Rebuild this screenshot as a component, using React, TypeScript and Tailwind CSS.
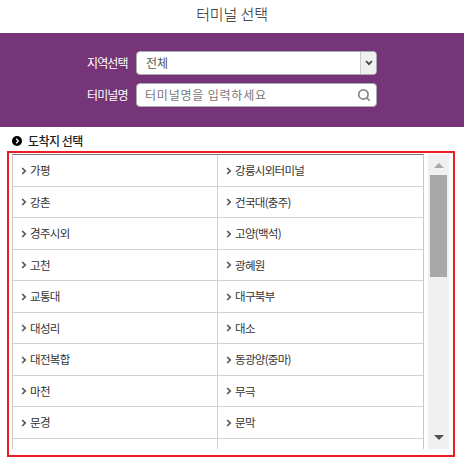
import { Search } from "lucide-react";

const rows = [
  ["가평", "강릉시외터미널"],
  ["강촌", "건국대(충주)"],
  ["경주시외", "고양(백석)"],
  ["고천", "광혜원"],
  ["교통대", "대구북부"],
  ["대성리", "대소"],
  ["대전복합", "동광양(중마)"],
  ["마천", "무극"],
  ["문경", "문막"],
  ["", ""],
];

function Chevron({ className }: { className?: string }) {
  return (
    <svg viewBox="0 0 6 8" className={className} fill="none" stroke="currentColor" strokeWidth="1.7">
      <path d="M1.2 1 L4.2 4 L1.2 7" />
    </svg>
  );
}

function Cell({ name, last }: { name: string; last?: boolean }) {
  return (
    <div className={`flex items-center pl-[8px] pt-[1px] text-[11.5px] tracking-[-0.7px] text-[#333] ${last ? "" : "border-r border-[#d2d2d2]"}`}>
      {name && <Chevron className="mr-[3px] h-[8px] w-[6px] text-[#555]" />}
      <span>{name}</span>
    </div>
  );
}

export default function App() {
  return (
    <div className="h-[466px] w-[464px] overflow-hidden bg-white font-['Noto_Sans_CJK_KR','Noto_Sans',sans-serif]">
      <h1 className="flex h-[33px] items-center justify-center pb-[5px] text-[15px] font-light tracking-[-0.1px] text-[#222]">
        터미널 선택
      </h1>

      <div className="flex h-[94px] flex-col gap-[8px] bg-[#753578] pl-[87px] pt-[18px]">
        <div className="flex items-center">
          <label className="w-[49px] text-[12px] tracking-[-0.9px] text-white">지역선택</label>
          <div className="flex h-[24px] w-[241px] overflow-hidden rounded-[4px] border border-[#aaa] bg-white">
            <span className="flex flex-1 items-center pl-[9px] text-[12px] text-[#555]">전체</span>
            <span className="flex w-[16px] items-center justify-center border-l border-[#ccc] bg-[#f0f0f0]">
              <svg viewBox="0 0 8 6" className="h-[6px] w-[8px] text-[#444]" fill="none" stroke="currentColor" strokeWidth="1.8">
                <path d="M1 1 L4 4.2 L7 1" />
              </svg>
            </span>
          </div>
        </div>
        <div className="flex items-center">
          <label className="w-[49px] text-[12px] tracking-[-0.9px] text-white">터미널명</label>
          <div className="flex h-[24px] w-[241px] items-center rounded-[4px] border border-[#aaa] bg-white pl-[8px] pr-[5px]">
            <span className="flex-1 text-[12px] tracking-[0.8px] text-[#777]">터미널명을 입력하세요</span>
            <Search className="h-[14px] w-[14px] text-[#888]" strokeWidth={3} />
          </div>
        </div>
      </div>

      <div className="flex h-[24px] items-center pl-[12px] pt-[3px]">
        <span className="mr-[6px] flex h-[10px] w-[10px] items-center justify-center rounded-full bg-black">
          <Chevron className="h-[6px] w-[5px] text-white" />
        </span>
        <span className="text-[12px] font-medium tracking-[-0.5px] text-[#222]">도착지 선택</span>
      </div>

      <div className="ml-[7px] flex h-[306px] w-[448px] gap-[4px] border-2 border-[#ed1c24] pl-[3px] pt-[1px]">
        <div className="h-[295px] w-[412px] overflow-hidden border-x border-t border-x-[#c8c8c8] border-t-[#777]">
          {rows.map((r, i) => (
            <div key={i} className="grid h-[31.5px] grid-cols-[205px_1fr] border-b border-[#d2d2d2]">
              <Cell name={r[0]} />
              <Cell name={r[1]} last />
            </div>
          ))}
        </div>
        <div className="flex h-[295px] w-[21px] flex-col items-center bg-[#f0f0f0]">
          <div className="mt-[9px] h-0 w-0 border-x-[5px] border-b-[5px] border-x-transparent border-b-[#a8a8a8]" />
          <div className="mt-[7px] h-[102px] w-[17px] bg-[#a8a8a8]" />
          <div className="mt-auto mb-[9px] h-0 w-0 border-x-[5px] border-t-[5px] border-x-transparent border-t-[#505050]" />
        </div>
      </div>
    </div>
  );
}
